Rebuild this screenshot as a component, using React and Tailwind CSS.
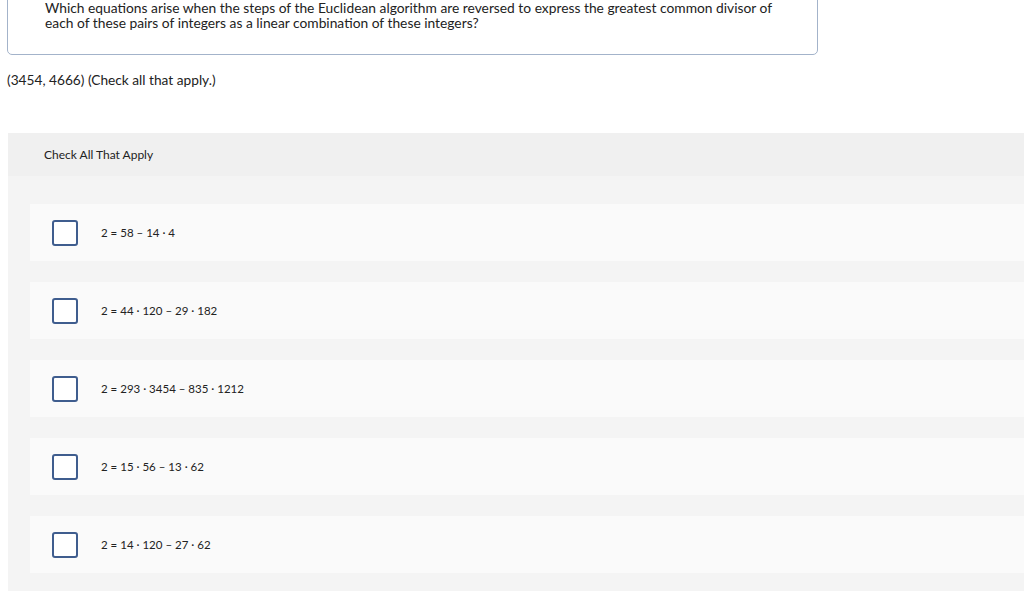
import React from "react";

const items = [
  "2 = 58 – 14 · 4",
  "2 = 44 · 120 – 29 · 182",
  "2 = 293 · 3454 – 835 · 1212",
  "2 = 15 · 56 – 13 · 62",
  "2 = 14 · 120 – 27 · 62",
];

export default function App() {
  return (
    <div className="w-[1024px] h-[591px] overflow-hidden bg-white text-[#333] font-['Lato','Liberation_Sans',sans-serif]">
      <div className="ml-[7px] mt-[-20px] w-[811px] h-[75px] border border-[#a3b3ca] rounded-[5px] pl-[37px] pt-[19px] text-[13.8px] leading-[15px] text-[#222]">
        <p>Which equations arise when the steps of the Euclidean algorithm are reversed to express the greatest common divisor of</p>
        <p>each of these pairs of integers as a linear combination of these integers?</p>
      </div>
      <p className="ml-[7px] mt-[17px] text-[13.7px] leading-[15px] text-[#222]">(3454, 4666) (Check all that apply.)</p>
      <div className="ml-[8px] mt-[46px] bg-[#f4f4f4] pb-[40px]">
        <div className="h-[43px] bg-[#f0f0f0] pl-[36px] flex items-center text-[12px] text-[#222]">
          Check All That Apply
        </div>
        <div className="pl-[22px] pt-[28px] flex flex-col gap-[21px]">
          {items.map((t, i) => (
            <div key={i} className="h-[57px] bg-[#fafafa] flex items-center pl-[22px]">
              <div className="w-[26px] h-[26px] border-2 border-[#3f5d8e] rounded-[3px] bg-white shrink-0" />
              <span className="ml-[23px] text-[11.5px] text-[#222]">{t}</span>
            </div>
          ))}
        </div>
      </div>
    </div>
  );
}
